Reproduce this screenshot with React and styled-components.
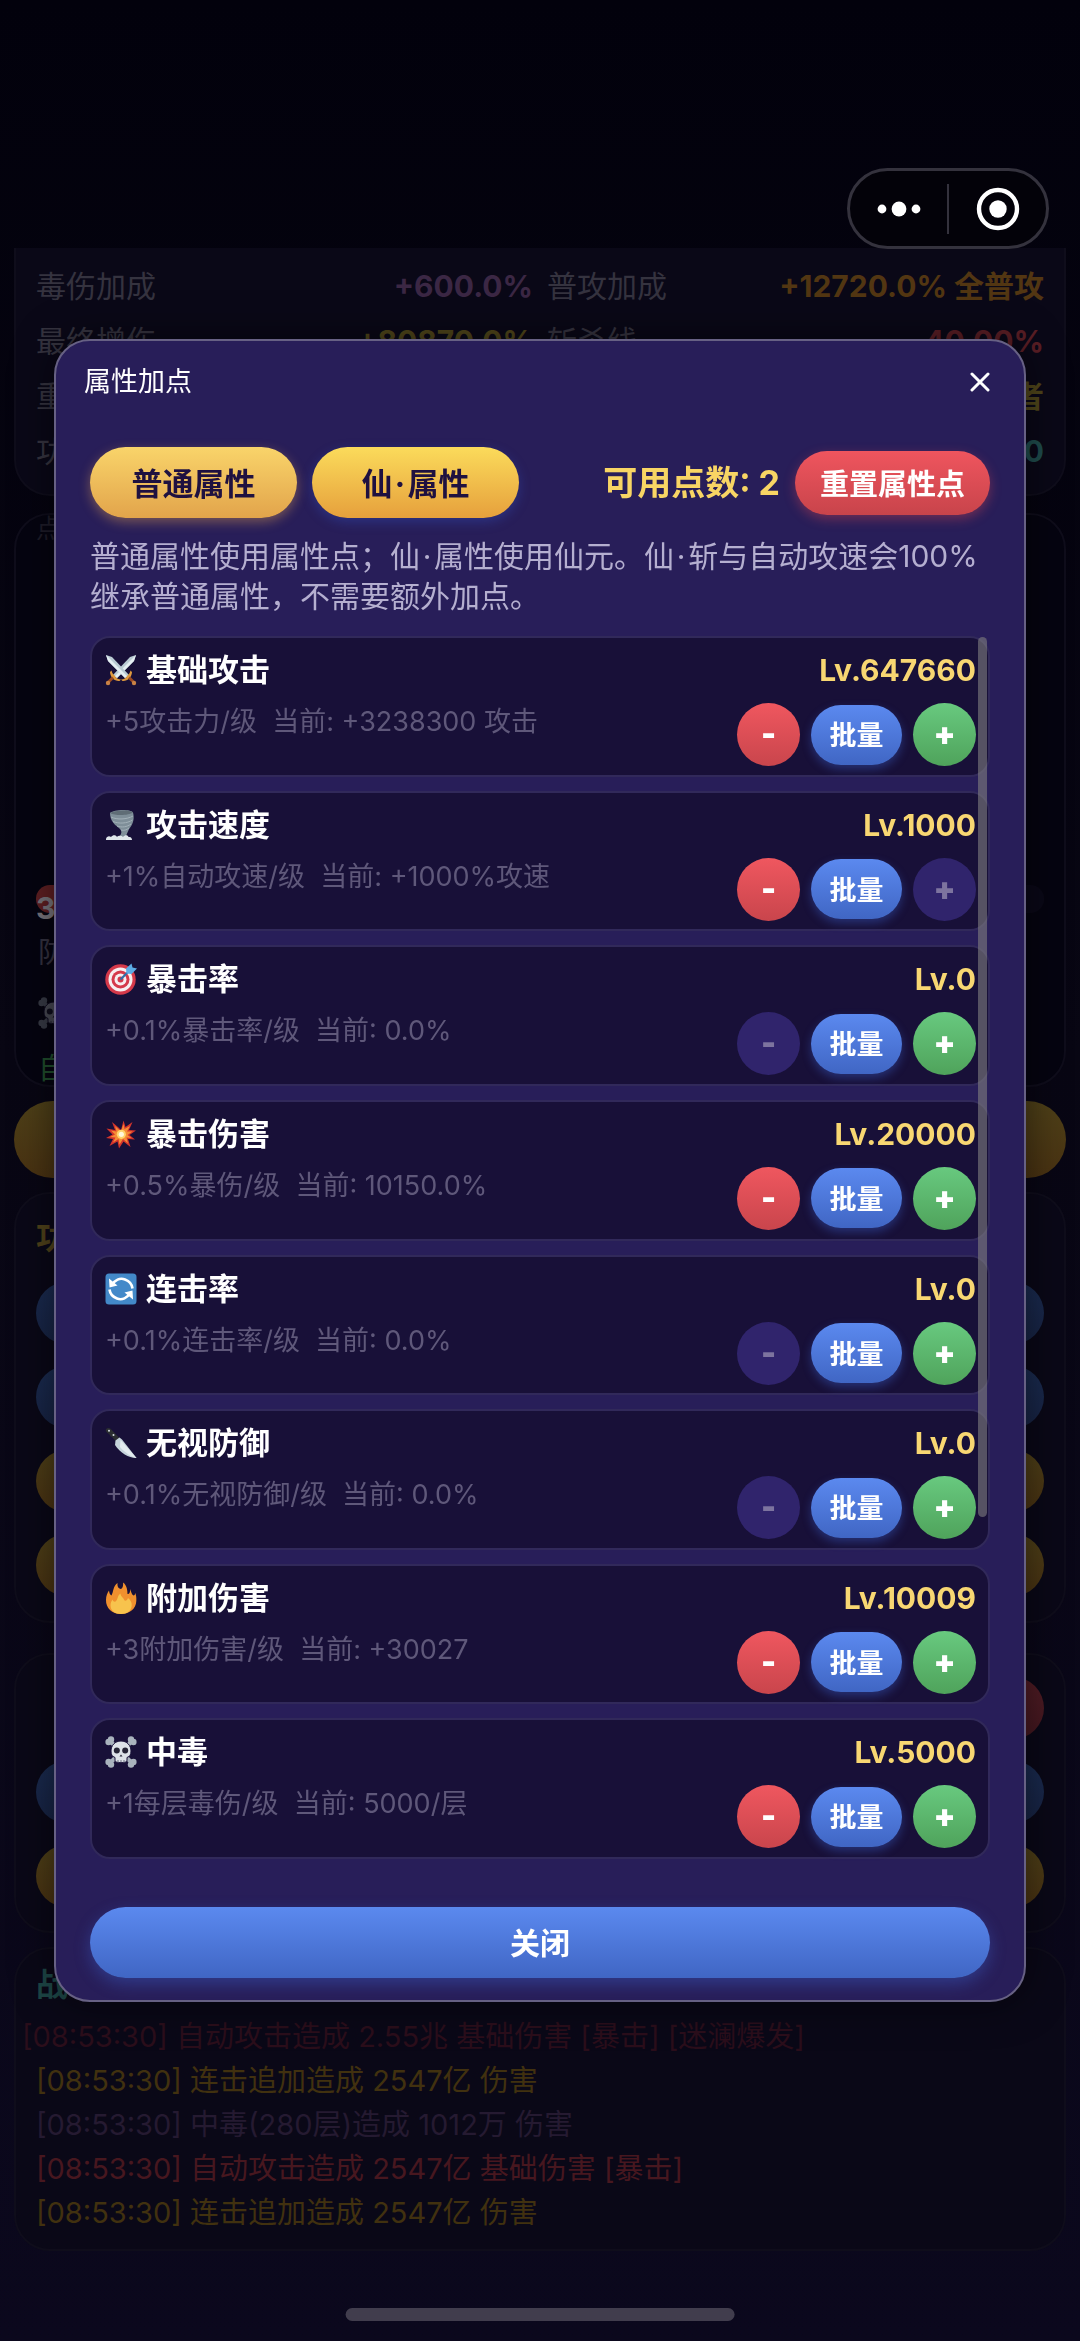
import styled, { createGlobalStyle, css } from 'styled-components';

const GlobalStyle = createGlobalStyle`
  * {
    box-sizing: border-box;
  }
  body {
    margin: 0;
    background: #090716;
    font-family: Inter, 'Noto Sans CJK SC', sans-serif;
    color: #fff;
  }
  button {
    font-family: inherit;
    border: none;
    padding: 0 0 2px;
    cursor: pointer;
  }
  h2, h3, p, ul {
    margin: 0;
    padding: 0;
    font-weight: 400;
  }
`;

/* ---------- game page under the dialog ---------- */

const Page = styled.main`
  min-height: 100vh;
  padding: 248px 14px 94px;
  display: flex;
  flex-direction: column;
  gap: 14px;
  background: linear-gradient(180deg, #02010c 0%, #080613 45%, #0b081d 100%);
`;

const Card = styled.section`
  padding: ${({ $pad }) => $pad || '22px 20px'};
  min-height: ${({ $height }) => $height}px;
  background: ${({ $dark }) => ($dark ? '#050410' : '#0a0817')};
  border: 2px solid #0f0d1b;
  border-radius: 36px;
`;

const BonusCard = styled(Card)`
  margin-bottom: 3px;
  border-top: none;
  border-radius: 0 0 36px 36px;
  display: grid;
  grid-template-columns: 1fr 1fr;
  column-gap: 14px;
  grid-auto-rows: 55px;
`;

const Bonus = styled.div`
  display: flex;
  justify-content: space-between;
  align-items: center;
  font-size: 30px;
  line-height: 40px;
  color: #35333f;
  white-space: nowrap;

  strong {
    font-weight: 700;
    color: ${({ $color }) => $color};
  }
`;

const EnemyCaption = styled.p`
  height: 370px;
  font-size: 26px;
  line-height: 28px;
  color: #1e1c28;
`;

const HealthBar = styled.div`
  height: 28px;
  margin-bottom: 18px;
  display: flex;
  align-items: center;
  border-radius: 14px;
  background: linear-gradient(90deg, #5e1f22 0 30%, #0a0817 30%);

  strong {
    font-size: 30px;
    line-height: 44px;
    padding-top: 18px;
    color: #77747b;
  }
`;

const EnemyLine = styled.p`
  height: 58px;
  padding-left: 2px;
  font-size: 29px;
  line-height: 44px;
  color: ${({ $color }) => $color};

  &:last-child {
    height: 38px;
  }
  svg {
    display: block;
    padding-top: 8px;
    height: 40px;
    opacity: 0.3;
  }
`;

const dimmed = {
  gold: 'linear-gradient(180deg, #4e4018, #493212)',
  blue: 'linear-gradient(180deg, #1a2b50, #172343)',
  red: 'linear-gradient(180deg, #511c25, #43171f)',
};

const PagePill = styled.button`
  width: ${({ $short }) => ($short ? '200px' : '100%')};
  height: ${({ $tall }) => ($tall ? 77 : 62)}px;
  flex-shrink: 0;
  border-radius: 39px;
  background: ${({ $tone }) => dimmed[$tone]};
`;

const PillCard = styled(Card)`
  display: flex;
  flex-direction: column;
  align-items: flex-end;
  gap: 22px;
`;

const UpgradeCard = styled(PillCard)`
  margin-top: 16px;
`;

const CardTitle = styled.h2`
  align-self: stretch;
  font-size: 32px;
  font-weight: 700;
  line-height: 44px;
  color: ${({ $color }) => $color};
`;

const LogList = styled.ul`
  margin-top: 8px;
  list-style: none;
`;

const LogLine = styled.li`
  margin-left: ${({ $entering }) => ($entering ? '-14px' : 0)};
  font-size: 29px;
  line-height: 44px;
  color: ${({ $color }) => $color};
`;

const Capsule = styled.div`
  position: fixed;
  top: 168px;
  right: 31px;
  z-index: 2;
  width: 202px;
  height: 81px;
  display: flex;
  align-items: center;
  border: 3px solid #34323d;
  border-radius: 41px;
  background: #030209;

  button {
    flex: 1;
    height: 50px;
    padding: 0;
    background: none;
  }
  button + button {
    border-left: 2px solid #34323d;
  }
  svg {
    display: block;
    margin: auto;
  }
`;

const HomeIndicator = styled.div`
  position: fixed;
  left: 50%;
  bottom: 20px;
  width: 36%;
  height: 13px;
  border-radius: 7px;
  background: #413d4d;
  transform: translateX(-50%);
`;

/* ---------- dialog ---------- */

const Overlay = styled.div`
  position: fixed;
  inset: 0;
  z-index: 1;
  display: flex;
  align-items: center;
  justify-content: center;
`;

const Dialog = styled.div`
  width: 90%;
  min-height: 71vh;
  display: flex;
  flex-direction: column;
  border: 2px solid #676184;
  border-radius: 36px;
  background: #281e59;
  box-shadow: 0 0 40px rgba(0, 0, 0, 0.5);
`;

const DialogHeader = styled.header`
  display: flex;
  align-items: center;
  justify-content: space-between;
  height: 82px;
  padding: 0 34px 0 28px;

  h2 {
    font-size: 27px;
    line-height: 40px;
  }
`;

const CloseIcon = styled.button`
  display: flex;
  padding: 0;
  background: none;
`;

const DialogBody = styled.div`
  flex: 1;
  display: flex;
  flex-direction: column;
  padding: 24px 34px 22px;
`;

const Toolbar = styled.div`
  display: flex;
  align-items: center;
  gap: 15px;
`;

const Tab = styled.button`
  width: 207px;
  height: 71px;
  border-radius: 36px;
  font-size: 31px;
  font-weight: 700;
  color: #1f1140;
  background: linear-gradient(180deg, #fbdb5b, #e6a03c);
  box-shadow: 0 4px 12px rgba(50, 80, 190, 0.4);

  ${({ $active }) =>
    $active &&
    css`
      background: linear-gradient(180deg, #f9d46a, #e2a44b);
      box-shadow: 0 4px 12px rgba(240, 170, 80, 0.4);
    `}
`;

const Points = styled.strong`
  margin-left: auto;
  font-size: 34px;
  font-weight: 700;
  line-height: 50px;
  color: #f8d564;
`;

const ResetButton = styled.button`
  width: 195px;
  height: 64px;
  border-radius: 32px;
  font-size: 29px;
  font-weight: 700;
  color: #fff;
  background: linear-gradient(180deg, #ef555e, #c8444b);
  box-shadow: 0 4px 12px rgba(220, 70, 80, 0.4);
`;

const Hint = styled.p`
  margin-top: 18px;
  font-size: 30px;
  line-height: 40px;
  color: #b5afd0;
`;

const ListWrap = styled.div`
  position: relative;
  flex: 1;
  display: flex;
  margin-top: 20px;
`;

const StatList = styled.ul`
  flex: 1;
  display: flex;
  flex-direction: column;
  gap: 14px;
  list-style: none;
`;

const ScrollThumb = styled.div`
  position: absolute;
  top: 1px;
  right: 3px;
  width: 9px;
  height: 72%;
  border-radius: 5px;
  background: rgba(128, 126, 128, 0.6);
`;

const StatRow = styled.li`
  flex: 1;
  display: flex;
  justify-content: space-between;
  padding: 13px 12px 0 13px;
  border: 2px solid #31295a;
  border-radius: 20px;
  background: #181038;
`;

const StatText = styled.div`
  display: flex;
  flex-direction: column;
  gap: 13px;

  h3 {
    display: flex;
    align-items: center;
    gap: 9px;
    font-size: 31px;
    font-weight: 700;
    line-height: 38px;
  }
  p {
    font-size: 27px;
    line-height: 40px;
    color: #5f587a;
  }
`;

const StatSide = styled.div`
  display: flex;
  flex-direction: column;
  align-items: flex-end;
  gap: 14px;
`;

const Level = styled.strong`
  font-size: 30px;
  font-weight: 700;
  line-height: 38px;
  color: #f8d772;
`;

const Controls = styled.div`
  display: flex;
  align-items: center;
  gap: 11px;
`;

const tones = {
  red: 'linear-gradient(180deg, #ef575f, #c9454c)',
  green: 'linear-gradient(180deg, #68c97f, #4fa35b)',
};

const StepButton = styled.button`
  width: 63px;
  height: 63px;
  display: flex;
  align-items: center;
  justify-content: center;
  border-radius: 50%;
  font-size: 32px;
  font-weight: 900;
  color: #fff;
  background: ${({ $tone }) => tones[$tone]};

  &:disabled {
    color: #7d749f;
    background: #30246c;
    cursor: default;
  }
`;

const BatchButton = styled.button`
  width: 91px;
  height: 60px;
  border-radius: 30px;
  font-size: 27px;
  font-weight: 700;
  color: #fff;
  background: linear-gradient(180deg, #5b89ef, #4066c4);
  box-shadow: 0 4px 10px rgba(60, 100, 210, 0.4);
`;

const CloseButton = styled.button`
  height: 71px;
  margin-top: 48px;
  border-radius: 36px;
  font-size: 30px;
  font-weight: 700;
  color: #fff;
  background: linear-gradient(180deg, #5b89ef, #4066c4);
  box-shadow: 0 6px 16px rgba(60, 100, 210, 0.4);
`;

/* ---------- icons ---------- */

const Icon = ({ children }) => (
  <svg width="32" height="32" viewBox="0 0 32 32" aria-hidden="true">
    {children}
  </svg>
);

const Sword = () => (
  <>
    <path d="M1 1 L7 3 L24 21 L20 24 L3 7 Z" fill="#b9cbd3" />
    <path d="M1 1 L22.500 22.500 L20 24 L3 7 Z" fill="#e4eef2" />
    <path d="M16 25.500 C19 25.500 21 24 22 22 C23.500 21 25 19 25.500 16.500 L27 18 C27 20 26 22.500 24.500 24.500 C22.500 26 20 27.300 17.500 27 Z" fill="#e09a3e" />
    <path d="M23 24.500 L25 22.500 L29.500 27 L27.500 29 Z" fill="#9b4a22" />
    <circle cx="29" cy="29" r="2.200" fill="#c98245" />
  </>
);

const SwordsIcon = () => (
  <Icon>
    <g transform="translate(32 0) scale(-1 1)">
      <Sword />
    </g>
    <Sword />
  </Icon>
);

const TornadoIcon = () => (
  <Icon>
    <path d="M5 4 C9 0.500 25 0 28 3.500 C29.500 9 28.500 14 25.500 18 C23 21 22.500 24 20.500 28 L13 29 C16 26 17 24 16 21.500 C14.500 18.500 11 17.500 8.500 14 C6 11 5 7.500 5 4 Z" fill="#7f8f99" />
    <path d="M5 4 C10 1 24 0.500 28 3.500 C24 6.500 10 7 5 4 Z" fill="#5f6d76" />
    <path d="M6 8 C12 11 22 10.500 28 7 M8 12.500 C14 15 22 14.500 27.500 11 M12 17 C17 18.800 22 18 26 15 M16 21 C19 21.800 21.500 21 24 19" fill="none" stroke="#a3b1b9" strokeWidth="1" />
    <path d="M1 30 C1.500 27 4.500 26.500 6 28 C8 25.500 11 26 12 28 C14 26 17 27 18 28 C20 25.500 23 26 23.500 28 C26 27.500 27 29 27 31 L1 31 Z" fill="#dfe6ea" />
  </Icon>
);

const TargetIcon = () => (
  <Icon>
    <circle cx="15.500" cy="16.500" r="15.200" fill="#d5394a" />
    <circle cx="15.500" cy="16.500" r="12" fill="#f6eef0" />
    <circle cx="15.500" cy="16.500" r="9" fill="#d5394a" />
    <circle cx="15.500" cy="16.500" r="6" fill="#f6eef0" />
    <circle cx="15.500" cy="16.500" r="3" fill="#d5394a" />
    <path d="M15.500 16.500 L25 7" stroke="#2f6ea8" strokeWidth="2.200" />
    <path d="M21 5.500 L26.500 0.500 L27.500 4.500 L32 5.500 L26.500 11 L21.500 10.500 Z" fill="#5cace6" />
  </Icon>
);

const BurstIcon = () => (
  <Icon>
    <path d="M16 12 L18.500 2.500 L20.500 9 L27.500 4 L24 12 L31 12.500 L24.500 17 L30 21.500 L23 21 L25.500 29 L18.500 23.500 L14 30.500 L12.500 23.500 L4.500 28 L8 21 L1 20 L7.500 16.500 L1.500 10.500 L10 12 L7 4 L13.500 9.500 Z" fill="#d4352c" />
    <path d="M16.500 12 L18.500 6 L19.500 11 L25 8 L22 13.500 L27.500 13.500 L22.500 17 L26.500 20 L21.500 19.500 L23 25.500 L18 21 L14.500 26.500 L13.500 21 L8 24.500 L10.500 19.500 L5 19 L10 16.500 L6 12.500 L11.500 13.500 L10 8 L14.500 12 Z" fill="#f68b36" />
    <circle cx="16.300" cy="16.300" r="4.600" fill="#ffd36b" />
    <circle cx="16.300" cy="16.300" r="2.600" fill="#fff6dc" />
  </Icon>
);

const CycleIcon = () => (
  <Icon>
    <rect x="0.500" y="0.500" width="31" height="31" rx="3.500" fill="#4389c9" />
    <path d="M7 12 C9.500 7 15 4.500 20 6.500 C24 8 27 11.500 27.500 15.500" fill="none" stroke="#fff" strokeWidth="2.600" />
    <path d="M25 20 C22.500 25 17 27.500 12 25.500 C8 24 5 20.500 4.500 16.500" fill="none" stroke="#fff" strokeWidth="2.600" />
    <path d="M4 5.500 L4.500 14.500 L12.500 12.500 Z" fill="#fff" />
    <path d="M28 26.500 L27.500 17.500 L19.500 19.500 Z" fill="#fff" />
  </Icon>
);

const KnifeIcon = () => (
  <Icon>
    <path d="M0.800 3.500 C0.500 1 3.500 0 5.500 1.800 L14.500 11 L11 14.500 L7 10 C5 9.500 5 8 4 7 C2.500 6 1 5 0.800 3.500 Z" fill="#2b2e31" />
    <circle cx="4" cy="3.800" r="1" fill="#d6dee2" />
    <circle cx="8.500" cy="8" r="1" fill="#d6dee2" />
    <path d="M10.500 13.500 L14.500 10.500 L17 12.500 L31.500 31 C25 31.500 15 26 10 18 Z" fill="#c5d3db" />
    <path d="M15.500 13 L31.500 31 C27 30 20 26 15 20 Z" fill="#e3ebef" />
  </Icon>
);

const FireIcon = () => (
  <Icon>
    <path d="M16 32 C7 32 0.800 26 1 18 C1 14 2.500 10.500 4 8.500 C4.300 11 5 13 6.500 13.500 C8.500 10 8 4 12.500 1 C12 4.500 13.500 6.500 15.500 7 C17.500 7 18.500 3.500 18 0.500 C22 3 22.500 9 22.500 12 C24 12.500 25.500 10.500 25 7 C26.500 10 26.500 12.500 28.500 13.500 C29.800 13.500 30 12 30.300 11 C31.200 13.500 31.500 16 31.300 19 C31 26.500 25 32 16 32 Z" fill="#f0902e" />
    <path d="M16 32 C10 32 5.500 28.500 5.500 23.500 C5.500 20.500 6.500 19 7.500 17.500 C8 19.500 9.500 20 10.500 19.500 C13 18 12 14 15.500 11.500 C15.500 14.500 18.500 15.500 19.500 18.500 C21 19 22.500 18 23 16 C25.500 18 27 20.500 26.700 23.500 C26.500 28.500 22 32 16 32 Z" fill="#f7c34d" />
  </Icon>
);

const SkullIcon = () => (
  <Icon>
    <path d="M5 5 L27 27 M27 5 L5 27" stroke="#a9b3bd" strokeWidth="4" />
    <g fill="#a9b3bd">
      <circle cx="3.600" cy="6" r="3.200" />
      <circle cx="6" cy="3.400" r="3.200" />
      <circle cx="28.400" cy="6" r="3.200" />
      <circle cx="26" cy="3.400" r="3.200" />
      <circle cx="3.600" cy="26" r="3.200" />
      <circle cx="6" cy="28.600" r="3.200" />
      <circle cx="28.400" cy="26" r="3.200" />
      <circle cx="26" cy="28.600" r="3.200" />
    </g>
    <path d="M16 5 C22 5 26 9.500 26 15 C26 18.500 25 20.500 22 21.500 L22 24 C22 26.500 19 26.500 16 26.500 C13 26.500 10 26.500 10 24 L10 21.500 C7 20.500 6 18.500 6 15 C6 9.500 10 5 16 5 Z" fill="#dde2e8" stroke="#181038" strokeWidth="1" />
    <circle cx="11.800" cy="14.500" r="3" fill="#252436" />
    <circle cx="20.200" cy="14.500" r="3" fill="#252436" />
    <path d="M14.500 20.500 L16 18.500 L17.500 20.500 Z" fill="#252436" />
    <path d="M13 24 V26.500 M16 24 V26.500 M19 24 V26.500" stroke="#6a6f80" strokeWidth="1" />
  </Icon>
);

/* ---------- data ---------- */

// middle dot with a hair space on each side
const DOT = '\u200a·\u200a';

const stats = [
  { name: '基础攻击', icon: SwordsIcon, effect: '+5攻击力/级', current: '+3238300 攻击', level: 647660 },
  { name: '攻击速度', icon: TornadoIcon, effect: '+1%自动攻速/级', current: '+1000%攻速', level: 1000, maxed: true },
  { name: '暴击率', icon: TargetIcon, effect: '+0.1%暴击率/级', current: '0.0%', level: 0 },
  { name: '暴击伤害', icon: BurstIcon, effect: '+0.5%暴伤/级', current: '10150.0%', level: 20000 },
  { name: '连击率', icon: CycleIcon, effect: '+0.1%连击率/级', current: '0.0%', level: 0 },
  { name: '无视防御', icon: KnifeIcon, effect: '+0.1%无视防御/级', current: '0.0%', level: 0 },
  { name: '附加伤害', icon: FireIcon, effect: '+3附加伤害/级', current: '+30027', level: 10009 },
  { name: '中毒', icon: SkullIcon, effect: '+1每层毒伤/级', current: '5000/层', level: 5000 },
];

const bonuses = [
  { label: '毒伤加成', value: '+600.0%', color: '#3b2744' },
  { label: '普攻加成', value: '+12720.0% 全普攻', color: '#523612' },
  { label: '最终增伤', value: '+80870.0%', color: '#4f451a' },
  { label: '斩杀线', value: '40.00%', color: '#5a1e25' },
  { label: '重', value: '' },
  { label: '', value: '者', color: '#4f451a' },
  { label: '功', value: '' },
  { label: '', value: '0', color: '#1f4b4c' },
];

const log = [
  { text: '[08:53:30] 自动攻击造成 2.55兆 基础伤害 [暴击] [迷澜爆发]', color: '#2b0e1b', entering: true },
  { text: '[08:53:30] 连击追加造成 2547亿 伤害', color: '#41310f' },
  { text: '[08:53:30] 中毒(280层)造成 1012万 伤害', color: '#251a31' },
  { text: '[08:53:30] 自动攻击造成 2547亿 基础伤害 [暴击]', color: '#47171f' },
  { text: '[08:53:30] 连击追加造成 2547亿 伤害', color: '#41310f' },
];

const Stat = ({ name, icon: StatIcon, effect, current, level, maxed }) => (
  <StatRow>
    <StatText>
      <h3>
        <StatIcon />
        {name}
      </h3>
      <p>
        {effect}&nbsp; 当前: {current}
      </p>
    </StatText>
    <StatSide>
      <Level>Lv.{level}</Level>
      <Controls>
        <StepButton $tone="red" disabled={level === 0}>
          -
        </StepButton>
        <BatchButton>批量</BatchButton>
        <StepButton $tone="green" disabled={maxed}>
          +
        </StepButton>
      </Controls>
    </StatSide>
  </StatRow>
);

const App = () => (
  <>
    <GlobalStyle />
    <Page>
      <BonusCard $pad="10px 20px" $height={248}>
        {bonuses.map(({ label, value, color }, index) => (
          <Bonus key={index} $color={color}>
            <span>{label}</span>
            <strong>{value}</strong>
          </Bonus>
        ))}
      </BonusCard>

      <Card $dark $pad="0 20px" $height={574}>
        <EnemyCaption>点</EnemyCaption>
        <HealthBar>
          <strong>3</strong>
        </HealthBar>
        <EnemyLine $color="#33313f">防</EnemyLine>
        <EnemyLine>
          <SkullIcon />
        </EnemyLine>
        <EnemyLine $color="#1f4c2b">自</EnemyLine>
      </Card>

      <PagePill $tone="gold" $tall aria-label="挑战" />

      <PillCard $height={431}>
        <CardTitle $color="#4f411a">功</CardTitle>
        <PagePill $tone="blue" aria-label="背包" />
        <PagePill $tone="blue" aria-label="技能" />
        <PagePill $tone="gold" aria-label="商店" />
        <PagePill $tone="gold" aria-label="任务" />
      </PillCard>

      <UpgradeCard $height={280}>
        <PagePill $tone="red" $short aria-label="重置" />
        <PagePill $tone="blue" aria-label="属性" />
        <PagePill $tone="gold" aria-label="升级" />
      </UpgradeCard>

      <Card $height={301} $pad="14px 20px">
        <CardTitle $color="#1d4646">战</CardTitle>
        <LogList>
          {log.map(({ text, color, entering }, index) => (
            <LogLine key={index} $color={color} $entering={entering}>
              {text}
            </LogLine>
          ))}
        </LogList>
      </Card>
    </Page>

    <Overlay>
      <Dialog role="dialog" aria-labelledby="dialog-title">
        <DialogHeader>
          <h2 id="dialog-title">属性加点</h2>
          <CloseIcon aria-label="关闭">
            <svg width="20" height="20" viewBox="0 0 20 20">
              <path d="M2 2 L18 18 M18 2 L2 18" stroke="#fff" strokeWidth="3" strokeLinecap="round" />
            </svg>
          </CloseIcon>
        </DialogHeader>
        <DialogBody>
          <Toolbar>
            <Tab $active>普通属性</Tab>
            <Tab>{`仙${DOT}属性`}</Tab>
            <Points>可用点数: 2</Points>
            <ResetButton>重置属性点</ResetButton>
          </Toolbar>
          <Hint>
            {`普通属性使用属性点；仙${DOT}属性使用仙元。仙${DOT}斩与自动攻速会100%继承普通属性，不需要额外加点。`}
          </Hint>
          <ListWrap>
            <StatList>
              {stats.map((stat) => (
                <Stat key={stat.name} {...stat} />
              ))}
            </StatList>
            <ScrollThumb />
          </ListWrap>
          <CloseButton>关闭</CloseButton>
        </DialogBody>
      </Dialog>
    </Overlay>

    <Capsule>
      <button aria-label="更多">
        <svg width="46" height="16" viewBox="0 0 46 16" fill="#fff">
          <circle cx="6" cy="8" r="4.400" />
          <circle cx="23" cy="8" r="7.400" />
          <circle cx="40" cy="8" r="4.400" />
        </svg>
      </button>
      <button aria-label="退出">
        <svg width="44" height="44" viewBox="0 0 44 44">
          <circle cx="22" cy="22" r="19" fill="none" stroke="#fff" strokeWidth="4.400" />
          <circle cx="22" cy="22" r="8.700" fill="#fff" />
        </svg>
      </button>
    </Capsule>
    <HomeIndicator />
  </>
);

export default App;
